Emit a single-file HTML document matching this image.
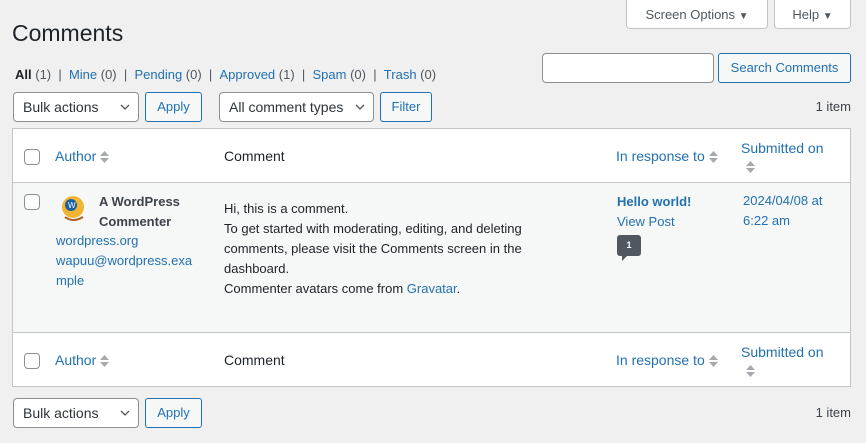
<!DOCTYPE html>
<html><head><style>
*{box-sizing:border-box;margin:0;padding:0}
body{width:866px;height:443px;background:#f0f0f1;font-family:"Liberation Sans",sans-serif;font-size:13px;color:#1d2327;position:relative;overflow:hidden}
.a{position:absolute}
a,.lk{color:#2271b1;text-decoration:none}
.btn{position:absolute;border:1px solid #2271b1;color:#2271b1;background:#f6f7f7;border-radius:3px;font-size:13px;text-align:center}
.sel{position:absolute;border:1px solid #8c8f94;background:#fff;border-radius:4px;font-size:14px;padding-left:9px;color:#2c3338}
.sel svg{position:absolute;right:8px;top:11px}
.tab{position:absolute;background:#fff;border:1px solid #c3c4c7;border-top:none;border-radius:0 0 4px 4px;color:#50575e;font-size:13px;text-align:center}
.cb{position:absolute;width:16px;height:16px;border:1px solid #8c8f94;border-radius:4px;background:#fff}
.sort{display:inline-block;width:9px;vertical-align:middle;margin-left:4px}
.th{position:absolute;font-size:14px}
</style></head><body>
<div class="tab" style="left:626px;top:0;width:142px;height:29px;line-height:29px">Screen Options <span style="font-size:10px">▼</span></div>
<div class="tab" style="left:774px;top:0;width:77px;height:29px;line-height:29px">Help <span style="font-size:10px">▼</span></div>
<div class="a" style="left:12px;top:20px;font-size:23px;font-weight:400">Comments</div>
<div class="a" style="left:15px;top:67px;font-size:13px;color:#50575e"><b style="color:#1d2327">All</b> (1) &nbsp;| &nbsp;<a>Mine</a> (0) &nbsp;| &nbsp;<a>Pending</a> (0) &nbsp;| &nbsp;<a>Approved</a> (1) &nbsp;| &nbsp;<a>Spam</a> (0) &nbsp;| &nbsp;<a>Trash</a> (0)</div>
<div class="a" style="left:542px;top:53px;width:172px;height:30px;background:#fff;border:1px solid #8c8f94;border-radius:4px"></div>
<div class="btn" style="left:718px;top:53px;width:133px;height:30px;line-height:28px">Search Comments</div>
<div class="sel" style="left:13px;top:92px;width:126px;height:30px;line-height:28px">Bulk actions<svg width="10" height="6"><path d="M1 1l4 4 4-4" stroke="#50575e" fill="none" stroke-width="1.3"/></svg></div>
<div class="btn" style="left:145px;top:92px;width:57px;height:30px;line-height:28px">Apply</div>
<div class="sel" style="left:219px;top:92px;width:155px;height:30px;line-height:28px">All comment types<svg width="10" height="6"><path d="M1 1l4 4 4-4" stroke="#50575e" fill="none" stroke-width="1.3"/></svg></div>
<div class="btn" style="left:380px;top:92px;width:52px;height:30px;line-height:28px">Filter</div>
<div class="a" style="right:15px;top:99px;color:#3c434a">1 item</div>

<div class="a" style="left:12px;top:128px;width:839px;height:259px;border:1px solid #c3c4c7;background:#fff"></div>
<div class="a" style="left:13px;top:182px;width:837px;height:151px;background:#f6f7f7;border-top:1px solid #c3c4c7;border-bottom:1px solid #c3c4c7"></div>

<div class="cb" style="left:24px;top:149px"></div>
<div class="th lk" style="left:55px;top:148px">Author<svg class="sort" width="9" height="14"><path d="M0 6l4.5-5 4.5 5zM0 8l4.5 5 4.5-5z" fill="#a7aaad"/></svg></div>
<div class="th" style="left:224px;top:148px">Comment</div>
<div class="th lk" style="left:616px;top:148px">In response to<svg class="sort" width="9" height="14"><path d="M0 6l4.5-5 4.5 5zM0 8l4.5 5 4.5-5z" fill="#a7aaad"/></svg></div>
<div class="th lk" style="left:741px;top:140px">Submitted on</div>
<svg class="a" style="left:746px;top:160px" width="9" height="14"><path d="M0 6l4.5-5 4.5 5zM0 8l4.5 5 4.5-5z" fill="#a7aaad"/></svg>

<div class="cb" style="left:24px;top:194px"></div>
<svg class="a" style="left:58px;top:193px" width="30" height="30" viewBox="0 0 30 30"><ellipse cx="15" cy="14" rx="11" ry="11" fill="#f2b531"/><circle cx="13" cy="12" r="6" fill="#1c5f9e"/><text x="10" y="15" font-size="8" fill="#fff" font-family="Liberation Sans">W</text><path d="M7 24q8 6 18 0" stroke="#b05a1d" stroke-width="2" fill="none"/></svg>
<div class="a" style="left:99px;top:192px;font-weight:bold;color:#3c434a;line-height:20px">A WordPress<br>Commenter</div>
<div class="a lk" style="left:56px;top:231px;line-height:20px">wordpress.org<br>wapuu@wordpress.exa<br>mple</div>
<div class="a" style="left:224px;top:199px;line-height:20px;color:#1d2327">Hi, this is a comment.<br>To get started with moderating, editing, and deleting<br>comments, please visit the Comments screen in the<br>dashboard.<br>Commenter avatars come from <a>Gravatar</a>.</div>
<div class="a lk" style="left:617px;top:192px;line-height:20px"><b>Hello world!</b><br>View Post</div>
<div class="a" style="left:617px;top:235px;width:24px;height:21px;background:#50575e;border-radius:3px;color:#fff;font-size:9px;font-weight:bold;text-align:center;line-height:21px">1</div>
<div class="a" style="left:622px;top:256px;width:0;height:0;border-left:5px solid #50575e;border-bottom:5px solid transparent"></div>
<div class="a lk" style="left:743px;top:191px;line-height:20px">2024/04/08 at<br>6:22 am</div>

<div class="cb" style="left:24px;top:353px"></div>
<div class="th lk" style="left:55px;top:352px">Author<svg class="sort" width="9" height="14"><path d="M0 6l4.5-5 4.5 5zM0 8l4.5 5 4.5-5z" fill="#a7aaad"/></svg></div>
<div class="th" style="left:224px;top:352px">Comment</div>
<div class="th lk" style="left:616px;top:352px">In response to<svg class="sort" width="9" height="14"><path d="M0 6l4.5-5 4.5 5zM0 8l4.5 5 4.5-5z" fill="#a7aaad"/></svg></div>
<div class="th lk" style="left:741px;top:344px">Submitted on</div>
<svg class="a" style="left:746px;top:364px" width="9" height="14"><path d="M0 6l4.5-5 4.5 5zM0 8l4.5 5 4.5-5z" fill="#a7aaad"/></svg>

<div class="sel" style="left:13px;top:398px;width:126px;height:30px;line-height:28px">Bulk actions<svg width="10" height="6"><path d="M1 1l4 4 4-4" stroke="#50575e" fill="none" stroke-width="1.3"/></svg></div>
<div class="btn" style="left:145px;top:398px;width:57px;height:30px;line-height:28px">Apply</div>
<div class="a" style="right:15px;top:405px;color:#3c434a">1 item</div>
</body></html>
